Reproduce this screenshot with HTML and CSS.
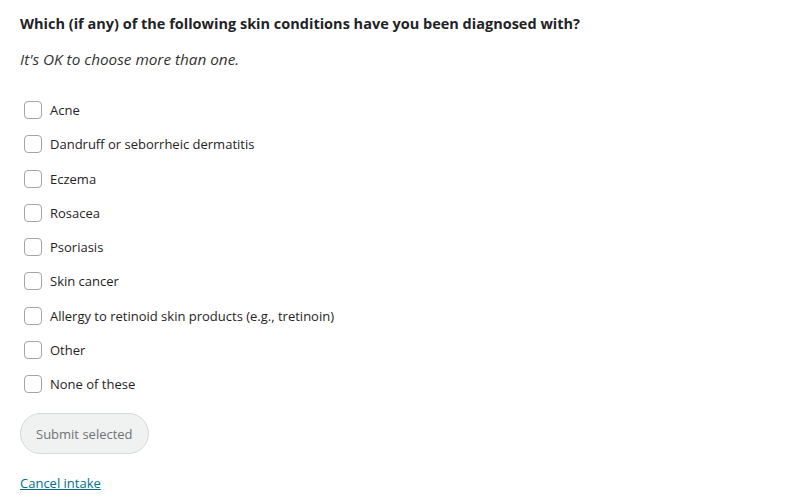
FILE: index.html
```html
<!DOCTYPE html>
<html>
<head>
<meta charset="utf-8">
<link rel="stylesheet" href="styles.css">
</head>
<body>
<main class="page">
  <h1 class="question">Which (if any) of the following skin conditions have you been diagnosed with?</h1>
  <p class="hint">It's OK to choose more than one.</p>
  <ul class="options">
    <li class="option"><span class="box"></span><span class="label">Acne</span></li>
    <li class="option"><span class="box"></span><span class="label">Dandruff or seborrheic dermatitis</span></li>
    <li class="option"><span class="box"></span><span class="label">Eczema</span></li>
    <li class="option"><span class="box"></span><span class="label">Rosacea</span></li>
    <li class="option"><span class="box"></span><span class="label">Psoriasis</span></li>
    <li class="option"><span class="box"></span><span class="label">Skin cancer</span></li>
    <li class="option"><span class="box"></span><span class="label">Allergy to retinoid skin products (e.g., tretinoin)</span></li>
    <li class="option"><span class="box"></span><span class="label">Other</span></li>
    <li class="option"><span class="box"></span><span class="label">None of these</span></li>
  </ul>
  <button class="submit" type="button">Submit selected</button>
  <a class="cancel" href="#">Cancel intake</a>
</main>
</body>
</html>
```
FILE: styles.css
```css
* { box-sizing: border-box; }
html, body { margin: 0; padding: 0; background: #fff; }
body { font-family: "Open Sans", "Noto Sans", sans-serif; color: #0f1111; }
.page { padding: 14px 20px 0 20px; display: flex; flex-direction: column; align-items: flex-start; }
.question { margin: 0; font-size: 14.5px; font-weight: 700; line-height: 20px; color: #1f2326; }
.hint { margin: 15px 0 0 0; font-size: 15.3px; font-style: italic; line-height: 20px; color: #333; }
.options { list-style: none; margin: 32px 0 0 0; padding: 0; display: flex; flex-direction: column; gap: 16.25px; }
.option { display: flex; align-items: center; gap: 8px; padding-left: 4px; height: 18px; }
.box { width: 18px; height: 18px; border: 1px solid #a2a6a6; border-radius: 4px; background: #fff; flex: none; }
.label { font-size: 13px; line-height: 18px; color: #1f2326; }
.submit { margin-top: 20px; height: 41px; padding: 0 15px; border-radius: 21px; border: 1px solid #d5d9d9; background: #f0f2f2; color: #6f7373; font-family: inherit; font-size: 13px; }
.cancel { margin-top: 20px; font-size: 13px; color: #007185; text-decoration: underline; line-height: 18px; }
```
